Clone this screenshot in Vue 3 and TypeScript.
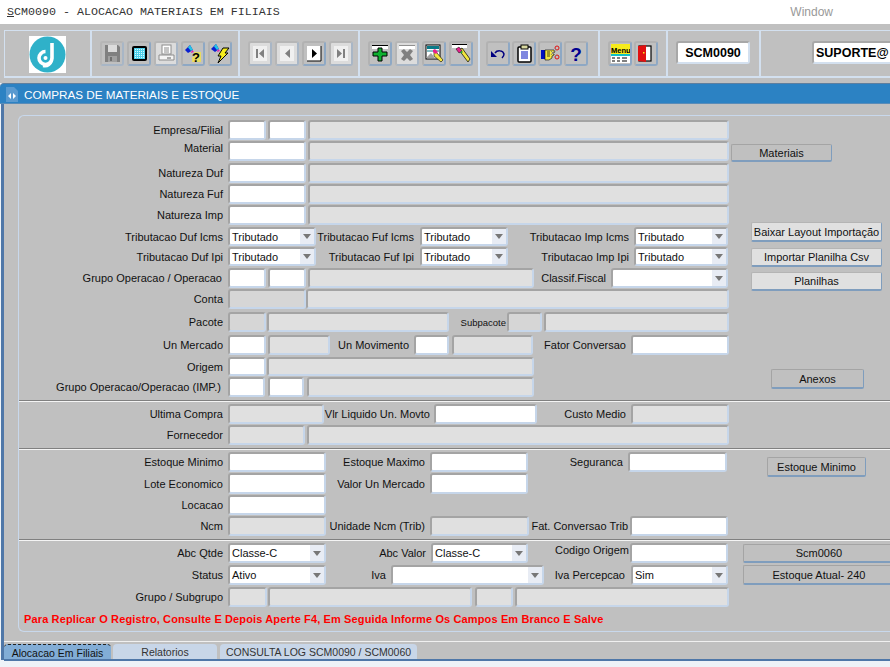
<template>
  <div class="app">
    <div class="title-bar">
      <span class="title-text"><u>S</u>CM0090 - ALOCACAO MATERIAIS EM FILIAIS</span>
      <span class="window-menu">Window</span>
    </div>

    <div class="toolbar">
      <div class="tool-frame">
        <div class="group logo-group">
          <svg class="logo" width="37" height="37" viewBox="0 0 37 37">
            <rect width="37" height="37" fill="#fff" />
            <circle cx="18.5" cy="18.5" r="18" fill="#2fb1c9" />
            <path d="M23 7v15a6.5 6.5 0 1 1-6.500-6.500" fill="none" stroke="#fff" stroke-width="3.600" />
            <path d="M23 22c0 7-5 9-9 8" fill="none" stroke="#fff" stroke-width="2.500" />
            <circle cx="16.500" cy="22" r="2" fill="#fff" />
          </svg>
        </div>

        <div class="group g2">
          <button class="tool off">
            <svg width="20" height="21" viewBox="0 0 20 21">
              <path d="M3 2h13l2 2v15H3z" fill="#808080" />
              <rect x="6" y="2" width="9" height="7" fill="#dcdcdc" />
              <rect x="6" y="13" width="9" height="6" fill="#a0a0a0" />
              <rect x="8" y="14" width="2" height="4" fill="#707070" />
            </svg>
          </button>
          <button class="tool">
            <svg width="20" height="21" viewBox="0 0 20 21">
              <defs>
                <pattern id="scr" width="2" height="2" patternUnits="userSpaceOnUse">
                  <rect width="2" height="2" fill="#4fd0ea" />
                  <rect width="1" height="1" fill="#d8f8ff" />
                </pattern>
              </defs>
              <rect x="3" y="3" width="15" height="15" rx="2" fill="#000" />
              <rect x="5" y="5" width="11" height="11" fill="url(#scr)" />
            </svg>
          </button>
          <button class="tool off lit">
            <svg width="20" height="21" viewBox="0 0 20 21">
              <rect x="6" y="2" width="9" height="9" fill="#fff" stroke="#8c8c8c" />
              <path d="M8 5h5M8 7h5M8 9h5" stroke="#8c8c8c" />
              <path d="M3 12h15v5H3z" fill="#f4f4f4" stroke="#8c8c8c" />
              <path d="M11 15h4" stroke="#606060" />
            </svg>
          </button>
          <button class="tool">
            <svg width="20" height="21" viewBox="0 0 20 21">
              <path d="M2 7 7 2l3 5-5 3z" fill="#0a1fd0" />
              <path d="M5 4.500 7 2l3 5-2 1z" fill="#25c5e5" />
              <path d="M9 7 11 9 8 10z" fill="#e020b0" />
              <path d="M11 9h7v10H9v-5h2z" fill="#f4e640" opacity=".75" />
              <text x="9" y="19" class="mark">?</text>
            </svg>
          </button>
          <button class="tool">
            <svg width="20" height="21" viewBox="0 0 20 21">
              <path d="M1 6 6 1l3 5-4 3z" fill="#0a1fd0" />
              <path d="M4 3.500 6 1l3 5-2 1z" fill="#25c5e5" />
              <path d="M8 6 10 8 7 9z" fill="#e020b0" />
              <path d="M13 5h6l-4 5h3L8 20l3-7H8z" fill="#f7ec1c" stroke="#000" />
            </svg>
          </button>
        </div>

        <div class="group g3">
          <button class="tool off lit">
            <svg width="20" height="21" viewBox="0 0 20 21">
              <rect x="3" y="3" width="14" height="15" fill="#f0f0f0" />
              <path d="M6 6h2v9H6zM14 6v9l-5-4.500z" fill="#808080" />
            </svg>
          </button>
          <button class="tool off lit">
            <svg width="20" height="21" viewBox="0 0 20 21">
              <rect x="3" y="3" width="14" height="15" fill="#f0f0f0" />
              <path d="M13 6v9l-5-4.500z" fill="#808080" />
            </svg>
          </button>
          <button class="tool">
            <svg width="20" height="21" viewBox="0 0 20 21">
              <rect x="3" y="3" width="14" height="15" fill="#fff" />
              <path d="M3 18h14V3" fill="none" stroke="#000" />
              <path d="M8 6v9l5-4.500z" fill="#000" />
            </svg>
          </button>
          <button class="tool off lit">
            <svg width="20" height="21" viewBox="0 0 20 21">
              <rect x="3" y="3" width="14" height="15" fill="#f0f0f0" />
              <path d="M6 6v9l5-4.500zM12 6h2v9h-2z" fill="#808080" />
            </svg>
          </button>
        </div>

        <div class="group g3">
          <button class="tool">
            <svg width="20" height="21" viewBox="0 0 20 21">
              <rect x="2" y="3" width="16" height="3" fill="#fff" />
              <path d="M2 2.500h16" stroke="#000" />
              <path d="M8 5h4v4h5v4h-5v5H8v-5H3V9h5z" fill="#10b030" stroke="#000" />
            </svg>
          </button>
          <button class="tool off lit">
            <svg width="20" height="21" viewBox="0 0 20 21">
              <rect x="2" y="3" width="16" height="3" fill="#fff" />
              <path d="M2 2.500h16" stroke="#909090" />
              <path d="m4 8 3-2 3 3 3-3 3 2-3 4 3 4-3 2-3-3-3 3-3-2 3-4z" fill="#808080" />
            </svg>
          </button>
          <button class="tool">
            <svg width="20" height="21" viewBox="0 0 20 21">
              <rect x="2" y="2" width="14" height="14" fill="#fff" stroke="#000" />
              <rect x="3" y="3" width="12" height="3" fill="#0a7a88" />
              <path d="M3 8h12" stroke="#0a7a88" />
              <path d="m2 15 5-5 4 5z" fill="#a0a0a0" />
              <path d="m10 7 3 3 6 7-2 2-7-6z" fill="#f4e640" stroke="#000" stroke-width=".6" />
              <path d="m9 7 2-1 3 3-2 2-3-2z" fill="#e8208c" />
            </svg>
          </button>
          <button class="tool">
            <svg width="20" height="21" viewBox="0 0 20 21">
              <rect x="1" y="2" width="15" height="3" fill="#fff" />
              <path d="M1 1.500h15" stroke="#000" />
              <path d="m8 7 3-2 8 11-2 3z" fill="#f4e640" stroke="#000" stroke-width=".7" />
              <path d="m5 6 3-2 3 4-3 2z" fill="#e8208c" stroke="#000" stroke-width=".5" />
              <path d="m9 9 2-1 1 1-2 1.500z" fill="#20a040" />
            </svg>
          </button>
        </div>

        <div class="group g5">
          <button class="tool">
            <svg width="20" height="21" viewBox="0 0 20 21">
              <path d="M7 10c2-3 8-3 9 1 0 2-1 3-2 4" fill="none" stroke="#000080" stroke-width="1.500" />
              <path d="M3 8v6h6z" fill="#000080" />
            </svg>
          </button>
          <button class="tool">
            <svg width="20" height="21" viewBox="0 0 20 21">
              <rect x="4" y="4" width="13" height="15" rx="1" fill="#fff" stroke="#000" stroke-width="1.500" />
              <rect x="7" y="2" width="7" height="4" fill="#d8d8a0" stroke="#000" />
              <path d="M7 9h7M7 11h7M7 13h7M7 15h7" stroke="#0010c0" />
            </svg>
          </button>
          <button class="tool">
            <svg width="20" height="21" viewBox="0 0 20 21">
              <rect x="1" y="7" width="4" height="9" fill="#0010c0" />
              <path d="M5 7h9l1 2-2 1 1 2-2 1 0 2-3 2H5z" fill="#f4e640" stroke="#000" stroke-width=".6" />
              <path d="M7 9h3M7 11h3M7 13h3" stroke="#000" stroke-width=".7" />
              <circle cx="17" cy="5" r="2" fill="none" stroke="#e01010" />
              <circle cx="17" cy="14" r="2" fill="none" stroke="#e01010" />
              <path d="m11 12 5-6M11 8l5 5" stroke="#808080" />
            </svg>
          </button>
          <button class="tool">
            <svg width="20" height="21" viewBox="0 0 20 21">
              <text x="10" y="18" text-anchor="middle" class="help">?</text>
            </svg>
          </button>
        </div>

        <div class="group g6">
          <button class="tool">
            <svg width="20" height="21" viewBox="0 0 20 21">
              <rect x="1" y="1" width="19" height="10" fill="#f7ec1c" />
              <text x="1" y="9.500" class="menu-mark">Menu</text>
              <rect x="1" y="11" width="19" height="2" fill="#10c0c8" />
              <rect x="1" y="13" width="19" height="7" fill="#fff" />
              <path d="M2 15h3M7 15h3M12 15h5M2 18h3M7 18h3M12 18h5" stroke="#000" />
            </svg>
          </button>
          <button class="tool">
            <svg width="20" height="21" viewBox="0 0 20 21">
              <rect x="3" y="3" width="12" height="15" fill="#fff" stroke="#000" stroke-width="1.200" />
              <path d="M2 3 10 2v17l-8-1z" fill="#e01010" />
              <rect x="7" y="9" width="1.500" height="1.500" fill="#f7ec1c" />
            </svg>
          </button>
        </div>

        <div class="group g7">
          <div class="code-box">SCM0090</div>
        </div>
        <div class="group g8">
          <div class="code-box user-box">SUPORTE@</div>
        </div>
      </div>
    </div>

    <div class="window">
      <div class="win-head">
        <svg class="win-icon" width="12" height="15" viewBox="0 0 12 15">
          <path d="M0 0h8l4 4v11H0z" fill="#5a9ad0" />
          <path d="M5 6 2 9l3 3zM7 6l3 3-3 3z" fill="#fff" />
        </svg>
        <span>COMPRAS DE MATERIAIS E ESTOQUE</span>
      </div>

      <div class="win-body">
        <div class="panel">
          <template v-for="(sec, si) in sections" :key="si">
            <div v-if="si > 0" class="divider"></div>
            <section class="section" :style="{ height: sec.height + 'px' }">
              <div class="fields">
                <div
                  v-for="(row, ri) in sec.rows"
                  :key="ri"
                  class="row"
                  :style="{ marginTop: row.top + 'px', height: row.h + 'px' }"
                >
                  <template v-for="(c, ci) in row.cells" :key="ci">
                    <label
                      v-if="c.kind === 'label'"
                      class="lab"
                      :class="{ small: c.small }"
                      :style="{ width: c.w + 'px', paddingRight: c.pad + 'px', paddingBottom: c.lift + 'px' }"
                    >{{ c.text }}</label>
                    <div
                      v-else-if="c.kind === 'sel'"
                      class="field sel"
                      :style="{ width: c.w + 'px', marginLeft: c.ml + 'px' }"
                    >
                      <span class="sel-val">{{ c.text }}</span>
                      <span class="sel-btn"><i></i></span>
                    </div>
                    <input
                      v-else
                      class="field"
                      :class="c.kind"
                      :readonly="c.kind !== 'inp'"
                      :style="{ width: c.w + 'px', marginLeft: c.ml + 'px' }"
                    />
                  </template>
                </div>
                <div v-if="sec.note" class="note">{{ sec.note }}</div>
              </div>
              <div class="side">
                <button
                  v-for="b in sec.side"
                  :key="b.text"
                  class="side-btn"
                  :class="{ light: b.light }"
                  :style="{ marginTop: b.top + 'px', marginLeft: b.ml + 'px', width: b.w + 'px', height: b.h + 'px' }"
                >{{ b.text }}</button>
              </div>
            </section>
          </template>
        </div>

        <div class="tab-zone">
          <div class="tabs">
            <div class="tab active">Alocacao Em Filiais</div>
            <div class="tab t2">Relatorios</div>
            <div class="tab t3">CONSULTA LOG SCM0090 / SCM0060</div>
          </div>
        </div>
      </div>
      <div class="win-foot"></div>
    </div>
  </div>
</template>

<script setup lang="ts">
type Kind = 'label' | 'inp' | 'off' | 'dim' | 'sel'

interface RawCell {
  kind: Kind
  x?: number
  r?: number
  text?: string
  pad?: number
  lift?: number
  small?: boolean
}

interface RawRow {
  y: number
  h: number
  cells: RawCell[]
}

interface RawBtn {
  text: string
  x: number
  r: number
  y: number
  b: number
  light?: boolean
}

const X0 = 19

const lab = (text: string, pad = 5, lift = 0, small = false): RawCell => ({ kind: 'label', text, pad, lift, small })
const inp = (x: number, r: number): RawCell => ({ kind: 'inp', x, r })
const off = (x: number, r: number): RawCell => ({ kind: 'off', x, r })
const dim = (x: number, r: number): RawCell => ({ kind: 'dim', x, r })
const sel = (x: number, r: number, text = ''): RawCell => ({ kind: 'sel', x, r, text })
const row = (y: number, b: number, ...cells: RawCell[]): RawRow => ({ y, h: b - y, cells })

// lays a row out left to right, labels fill the space up to the next field
function layoutCells(cells: RawCell[]) {
  let end = X0
  return cells.map((c, i) => {
    if (c.kind === 'label') {
      const next = cells[i + 1]?.x ?? end
      const w = next - end
      end = next
      return { ...c, w, ml: 0 }
    }
    const ml = c.x! - end
    end = c.r!
    return { ...c, w: c.r! - c.x!, ml }
  })
}

function makeSection(top: number, bottom: number, rows: RawRow[], side: RawBtn[], note = '') {
  let y = top
  const outRows = rows.map((r) => {
    const t = r.y - y
    y = r.y + r.h
    return { top: t, h: r.h, cells: layoutCells(r.cells) }
  })
  let sy = top
  const outSide = side.map((b) => {
    const t = b.y - sy
    sy = b.b
    return { text: b.text, light: b.light, top: t, ml: b.x - 730, w: b.r - b.x, h: b.b - b.y }
  })
  return { height: bottom - top, rows: outRows, side: outSide, note }
}

const sections = [
  makeSection(116, 400, [
    row(120, 140, lab('Empresa/Filial'), inp(228, 266), inp(268, 306), off(308, 729)),
    row(141, 161, lab('Material', 5, 6), inp(228, 306), off(308, 729)),
    row(163, 183, lab('Natureza Duf'), inp(228, 306), off(308, 729)),
    row(184, 204, lab('Natureza Fuf'), inp(228, 306), off(308, 729)),
    row(205, 225, lab('Natureza Imp'), inp(228, 306), off(308, 729)),
    row(227, 246, lab('Tributacao Duf Icms'), sel(228, 316, 'Tributado'), lab('Tributacao Fuf Icms', 6), sel(420, 508, 'Tributado'), lab('Tributacao Imp Icms', 5), sel(634, 728, 'Tributado')),
    row(247, 266, lab('Tributacao Duf Ipi'), sel(228, 316, 'Tributado'), lab('Tributacao Fuf Ipi', 6), sel(420, 508, 'Tributado'), lab('Tributacao Imp Ipi', 5), sel(634, 728, 'Tributado')),
    row(268, 288, lab('Grupo Operacao / Operacao', 6), inp(228, 266), inp(268, 306), off(308, 534), lab('Classif.Fiscal'), sel(611, 728)),
    row(289, 309, lab('Conta'), dim(228, 306), off(306, 729)),
    row(312, 332, lab('Pacote'), dim(228, 266), off(267, 449), lab('Subpacote', 1, 0, true), dim(507, 542), off(544, 729)),
    row(335, 355, lab('Un Mercado'), inp(228, 266), off(268, 330), lab('Un Movimento'), inp(414, 449), off(452, 533), lab('Fator Conversao'), inp(631, 729)),
    row(357, 376, lab('Origem'), inp(228, 266), off(267, 534)),
    row(377, 397, lab('Grupo Operacao/Operacao (IMP.)', 7), inp(228, 265), inp(268, 304), off(307, 534)),
  ], [
    { text: 'Materiais', x: 731, r: 832, y: 144, b: 162 },
    { text: 'Baixar Layout Importação', x: 751, r: 882, y: 222, b: 242, light: true },
    { text: 'Importar Planilha Csv', x: 751, r: 882, y: 248, b: 267, light: true },
    { text: 'Planilhas', x: 751, r: 882, y: 272, b: 291, light: true },
    { text: 'Anexos', x: 771, r: 864, y: 369, b: 389 },
  ]),
  makeSection(402, 448, [
    row(404, 424, lab('Ultima Compra'), off(228, 324), lab('Vlr Liquido Un. Movto', 4), inp(434, 537), lab('Custo Medio'), off(631, 729)),
    row(425, 445, lab('Fornecedor'), off(228, 305), off(307, 729)),
  ], []),
  makeSection(450, 539, [
    row(452, 472, lab('Estoque Minimo'), inp(228, 326), lab('Estoque Maximo'), inp(430, 528), lab('Seguranca'), inp(628, 727)),
    row(473, 494, lab('Lote Economico'), inp(228, 326), lab('Valor Un Mercado'), inp(430, 528)),
    row(495, 515, lab('Locacao'), inp(228, 326)),
    row(516, 536, lab('Ncm'), off(228, 326), lab('Unidade Ncm (Trib)'), off(430, 529), lab('Fat. Conversao Trib', 2), inp(630, 728)),
  ], [
    { text: 'Estoque Minimo', x: 767, r: 866, y: 457, b: 477 },
  ]),
  makeSection(541, 631, [
    row(543, 563, lab('Abc Qtde'), sel(228, 326, 'Classe-C'), lab('Abc Valor'), sel(431, 528, 'Classe-C'), lab('Codigo Origem', 1, 6), inp(630, 728)),
    row(565, 585, lab('Status'), sel(228, 326, 'Ativo'), lab('Iva'), sel(391, 544), lab('Iva Percepcao', 6), sel(631, 728, 'Sim')),
    row(587, 607, lab('Grupo / Subgrupo'), off(228, 267), off(268, 472), off(475, 513), off(515, 729)),
  ], [
    { text: 'Scm0060', x: 743, r: 895, y: 544, b: 563 },
    { text: 'Estoque Atual- 240', x: 743, r: 895, y: 565, b: 585 },
  ], 'Para Replicar O Registro, Consulte E Depois Aperte F4, Em Seguida Informe Os Campos Em Branco E Salve'),
]
</script>

<style scoped>
.app {
  width: 890px;
  height: 667px;
  overflow: hidden;
  display: flex;
  flex-direction: column;
  background: #fff;
  font-family: "Liberation Sans", Arial, sans-serif;
  font-size: 11px;
  color: #111;
}

.title-bar {
  height: 24px;
  flex: none;
  display: flex;
  align-items: center;
  justify-content: space-between;
  padding: 0 57px 0 7px;
  font-size: 12px;
}

.title-text {
  font-family: "Liberation Mono", "Courier New", monospace;
  font-size: 11.67px;
  color: #333;
}

.window-menu {
  color: #999;
}

.toolbar {
  height: 59px;
  flex: none;
  background: #c0c0c0;
  padding: 6px 0 0 4px;
  box-sizing: border-box;
}

.tool-frame {
  display: flex;
  height: 48px;
  box-sizing: border-box;
  border: 1px solid #d3e0ef;
  border-right: 0;
  border-bottom-width: 2px;
}

.group {
  flex: none;
  height: 100%;
  box-sizing: border-box;
  display: flex;
  align-items: flex-start;
  gap: 3px;
  padding-top: 10px;
  border-right: 2px solid #d3e0ef;
}

.logo-group { width: 87px; padding: 5px 0 0 24px; }
.g2 { width: 148px; padding-left: 8px; }
.g3 { width: 120px; padding-left: 8px; }
.g5 { width: 120px; padding-left: 6px; gap: 2px; }
.g6 { width: 68px; padding-left: 8px; gap: 2px; }
.g7 { width: 93px; padding-left: 8px; }
.g8 { width: 130px; padding-left: 51px; border-right: 0; }

.tool {
  width: 24px;
  height: 25px;
  padding: 0;
  box-sizing: border-box;
  background: #c0c0c0;
  border: 2px solid;
  border-color: #b2b2b2 #8ea8c4 #8ea8c4 #b2b2b2;
  border-radius: 3px;
}

.tool svg {
  display: block;
}

.tool.off {
  border-color: #b6b6b6 #a8b6c6 #a8b6c6 #b6b6b6;
}

.tool.lit {
  background: #dcdcdc;
}

.mark {
  font: bold 13px "Liberation Sans", sans-serif;
  fill: #000;
}

.help {
  font: bold 19px "Liberation Sans", sans-serif;
  fill: #000090;
}

.menu-mark {
  font: bold 7.500px "Liberation Sans", sans-serif;
  fill: #000;
}

.code-box {
  height: 23px;
  width: 74px;
  box-sizing: border-box;
  background: #fff;
  border: 2px solid;
  border-color: #a8a8a8 #d3e0ef #d3e0ef #a8a8a8;
  border-radius: 3px;
  display: flex;
  align-items: center;
  justify-content: center;
  font-family: "Liberation Sans", sans-serif;
  font-size: 12.5px;
  font-weight: bold;
  color: #000;
}

.user-box {
  width: 78px;
  justify-content: flex-start;
  padding-left: 2px;
  border-right: 0;
  border-radius: 3px 0 0 3px;
}

.window {
  flex: 1;
  display: flex;
  flex-direction: column;
  min-height: 0;
  background: #eef3f8;
}

.win-head {
  height: 21px;
  flex: none;
  box-sizing: border-box;
  display: flex;
  align-items: center;
  gap: 6px;
  padding: 1px 0 0 6px;
  background: #2c82c3;
  border-top: 1px solid #5f7f9f;
  border-bottom: 1px solid #5a8cb8;
  border-radius: 4px 0 0 0;
  color: #fff;
  font-size: 11.7px;
}

.win-icon {
  flex: none;
}

.win-body {
  flex: 1;
  min-height: 0;
  box-sizing: border-box;
  margin-left: 1px;
  border-left: 3px solid #4f77a8;
  background: #c0c0c0;
  padding: 11px 0 0 14px;
  display: flex;
  flex-direction: column;
}

.panel {
  height: 517px;
  flex: none;
  box-sizing: border-box;
  border: 1px solid #c8d8ec;
  border-right: 0;
  border-radius: 6px 0 0 6px;
}

.section {
  display: flex;
}

.fields {
  width: 711px;
  flex: none;
}

.divider {
  height: 2px;
  background: linear-gradient(#808080 50%, #f4f4f4 50%);
}

.row {
  display: flex;
  align-items: stretch;
}

.lab {
  flex: none;
  box-sizing: border-box;
  display: flex;
  align-items: center;
  justify-content: flex-end;
  white-space: nowrap;
}

.lab.small {
  font-size: 9.500px;
}

.field {
  flex: none;
  display: block;
  box-sizing: border-box;
  height: 100%;
  padding: 0;
  margin: 0;
  background: #fff;
  border: 2px solid;
  border-color: #a4a4a4 #c6d6ea #c6d6ea #a4a4a4;
  border-radius: 3px;
  outline: none;
}

.field.off {
  background: #e0e0e0;
}

.field.dim {
  background: #d6d6d6;
}

.sel {
  display: flex;
  align-items: center;
  font-size: 11px;
}

.sel-val {
  flex: 1;
  padding-left: 2px;
  color: #111;
}

.sel-btn {
  width: 14px;
  height: 100%;
  flex: none;
  background: #e8ecf4;
  display: flex;
  align-items: center;
  justify-content: center;
}

.sel-btn i {
  width: 0;
  height: 0;
  border-style: solid;
  border-width: 5px 4px 0;
  border-color: #777 transparent transparent;
}

.note {
  margin: 6px 0 0 5px;
  white-space: nowrap;
  color: #f00;
  font-size: 11px;
  font-weight: bold;
  letter-spacing: 0.13px;
}

.side {
  display: flex;
  flex-direction: column;
  align-items: flex-start;
  flex: none;
  width: 160px;
}

.side-btn {
  flex: none;
  box-sizing: border-box;
  padding: 0;
  background: #c0c0c0;
  border: 1px solid;
  border-color: #a4a4a4 #7f9dbd #7f9dbd #a4a4a4;
  border-width: 1px 1px 2px 1px;
  border-radius: 2px;
  font: 11px "Liberation Sans", Arial, sans-serif;
  color: #111;
  white-space: nowrap;
}

.side-btn.light {
  background: #e0e0e0;
  border-color: #b4b4b4 #7f9dbd #7f9dbd #b4b4b4;
}

.tab-zone {
  flex: none;
  margin: 9px 0 0 -14px;
  height: 20px;
  box-sizing: border-box;
  background: #c0c0c0;
  border-top: 1px solid #f0f0f0;
  border-bottom: 2px solid #4f77a8;
}

.tabs {
  display: flex;
  height: 100%;
  padding-top: 2px;
  box-sizing: border-box;
  gap: 2px;
  font-size: 10.500px;
}

.tab {
  flex: none;
  box-sizing: border-box;
  background: #c8d6e8;
  display: flex;
  align-items: center;
  justify-content: center;
  white-space: nowrap;
  border-radius: 4px 4px 0 0;
  color: #333;
  padding-top: 1px;
}

.tab.active {
  width: 107px;
  background: #82add6;
  border-top: 1px dashed #222;
  color: #111;
}

.tab.t2 { width: 104px; }
.tab.t3 { width: 197px; margin-left: 1px; }

.win-foot {
  height: 7px;
  flex: none;
}
</style>

<style>
html,
body {
  margin: 0;
  overflow: hidden;
}
</style>
